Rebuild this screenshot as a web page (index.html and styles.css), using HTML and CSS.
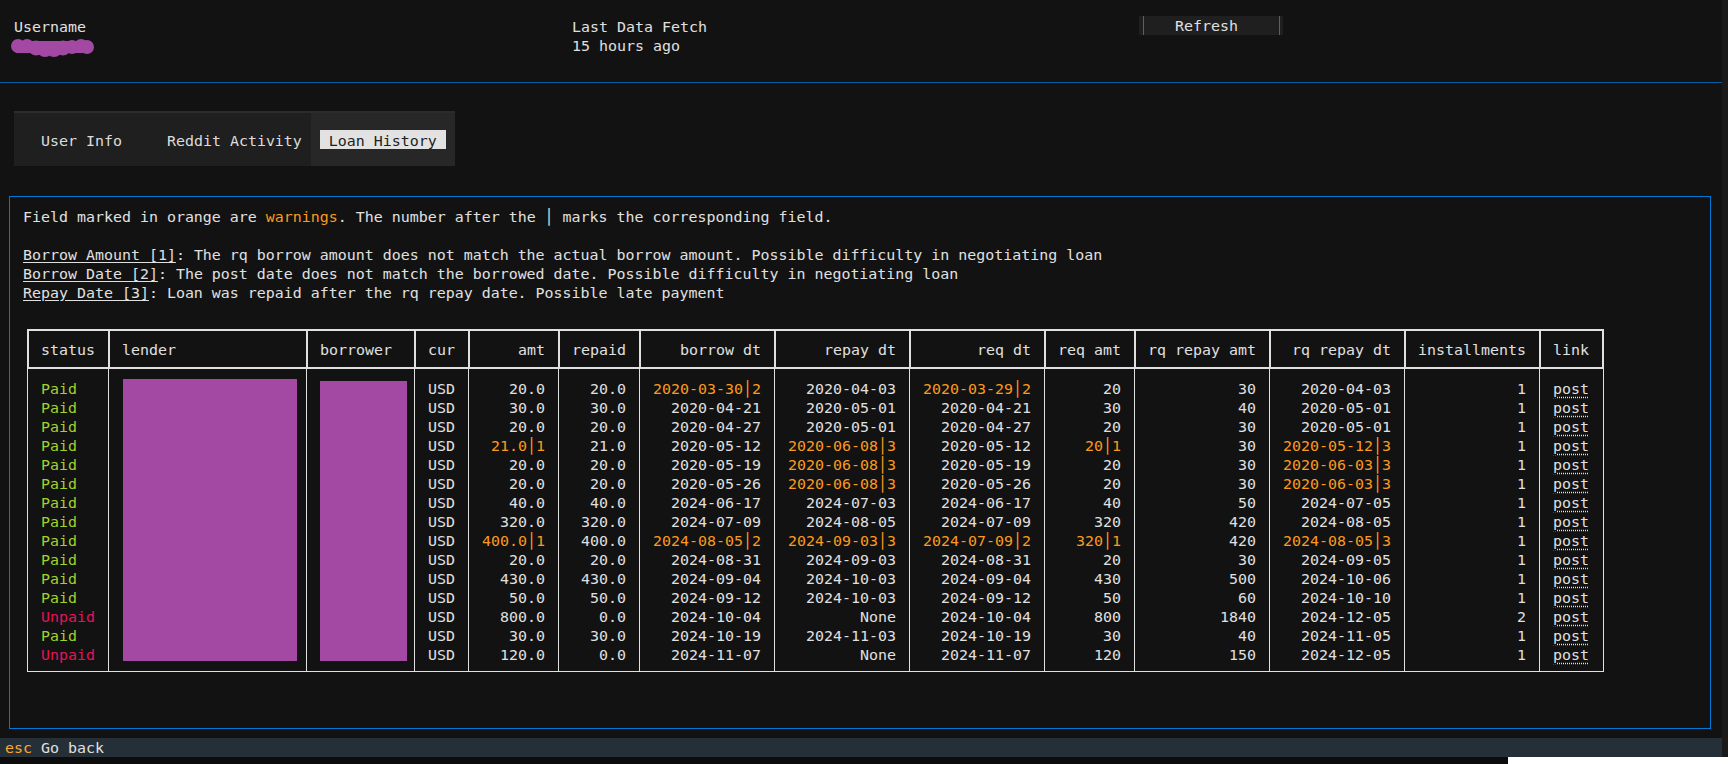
FILE: index.html
```html
<!DOCTYPE html>
<html lang="en">
<head>
<meta charset="utf-8">
<title>Loan History</title>
<link rel="stylesheet" href="styles.css">
</head>
<body>
<div class="screen">
  <div class="app">
    <header class="topbar">
      <div class="field">
        <div class="label">Username</div>
        <div class="value"><svg class="blob" width="84" height="19" viewBox="0 0 84 19" aria-label="redacted"><rect x="5" y="4" width="72" height="12" fill="#a349a4"/><circle cx="7" cy="9" r="7" fill="#a349a4"/><circle cx="16" cy="9" r="7" fill="#a349a4"/><circle cx="25" cy="11" r="7.5" fill="#a349a4"/><circle cx="34" cy="12" r="8" fill="#a349a4"/><circle cx="43" cy="12" r="8" fill="#a349a4"/><circle cx="52" cy="11" r="7.5" fill="#a349a4"/><circle cx="61" cy="10" r="7" fill="#a349a4"/><circle cx="70" cy="9" r="7" fill="#a349a4"/><circle cx="76" cy="10" r="7" fill="#a349a4"/></svg></div>
      </div>
      <div class="field">
        <div class="label">Last Data Fetch</div>
        <div class="value">15 hours ago</div>
      </div>
      <div class="actions">
        <button class="btn" type="button"><span class="btn-inner">Refresh</span></button>
      </div>
    </header>

    <div class="rule"></div>

    <nav class="tabs">
      <div class="tab tab-first">User Info</div>
      <div class="tab tab-second">Reddit Activity</div>
      <div class="tab tab-active"><span class="tab-label">Loan History</span></div>
    </nav>

    <section class="panel">
      <p class="intro">Field marked in orange are <span class="warn">warnings</span>. The number after the │ marks the corresponding field.</p>
      <ul class="legend">
        <li><span class="term">Borrow Amount [1]</span>: The rq borrow amount does not match the actual borrow amount. Possible difficulty in negotiating loan</li>
        <li><span class="term">Borrow Date [2]</span>: The post date does not match the borrowed date. Possible difficulty in negotiating loan</li>
        <li><span class="term">Repay Date [3]</span>: Loan was repaid after the rq repay date. Possible late payment</li>
      </ul>

      <div class="table-wrap">
        <table class="loans">
          <thead>
            <tr>
              <th class="c-status">status</th>
              <th class="c-lender">lender</th>
              <th class="c-borrower">borrower</th>
              <th class="c-cur">cur</th>
              <th class="c-amt">amt</th>
              <th class="c-repaid">repaid</th>
              <th class="c-date">borrow dt</th>
              <th class="c-date">repay dt</th>
              <th class="c-date">req dt</th>
              <th class="c-amt">req amt</th>
              <th class="c-date">rq repay amt</th>
              <th class="c-date">rq repay dt</th>
              <th class="c-date">installments</th>
              <th class="c-link">link</th>
            </tr>
          </thead>
          <tbody>
            <tr><td class="ok">Paid</td><td></td><td></td><td>USD</td><td>20.0</td><td>20.0</td><td class="warn">2020-03-30│2</td><td>2020-04-03</td><td class="warn">2020-03-29│2</td><td>20</td><td>30</td><td>2020-04-03</td><td>1</td><td><a class="post">post</a></td></tr>
            <tr><td class="ok">Paid</td><td></td><td></td><td>USD</td><td>30.0</td><td>30.0</td><td>2020-04-21</td><td>2020-05-01</td><td>2020-04-21</td><td>30</td><td>40</td><td>2020-05-01</td><td>1</td><td><a class="post">post</a></td></tr>
            <tr><td class="ok">Paid</td><td></td><td></td><td>USD</td><td>20.0</td><td>20.0</td><td>2020-04-27</td><td>2020-05-01</td><td>2020-04-27</td><td>20</td><td>30</td><td>2020-05-01</td><td>1</td><td><a class="post">post</a></td></tr>
            <tr><td class="ok">Paid</td><td></td><td></td><td>USD</td><td class="warn">21.0│1</td><td>21.0</td><td>2020-05-12</td><td class="warn">2020-06-08│3</td><td>2020-05-12</td><td class="warn">20│1</td><td>30</td><td class="warn">2020-05-12│3</td><td>1</td><td><a class="post">post</a></td></tr>
            <tr><td class="ok">Paid</td><td></td><td></td><td>USD</td><td>20.0</td><td>20.0</td><td>2020-05-19</td><td class="warn">2020-06-08│3</td><td>2020-05-19</td><td>20</td><td>30</td><td class="warn">2020-06-03│3</td><td>1</td><td><a class="post">post</a></td></tr>
            <tr><td class="ok">Paid</td><td></td><td></td><td>USD</td><td>20.0</td><td>20.0</td><td>2020-05-26</td><td class="warn">2020-06-08│3</td><td>2020-05-26</td><td>20</td><td>30</td><td class="warn">2020-06-03│3</td><td>1</td><td><a class="post">post</a></td></tr>
            <tr><td class="ok">Paid</td><td></td><td></td><td>USD</td><td>40.0</td><td>40.0</td><td>2024-06-17</td><td>2024-07-03</td><td>2024-06-17</td><td>40</td><td>50</td><td>2024-07-05</td><td>1</td><td><a class="post">post</a></td></tr>
            <tr><td class="ok">Paid</td><td></td><td></td><td>USD</td><td>320.0</td><td>320.0</td><td>2024-07-09</td><td>2024-08-05</td><td>2024-07-09</td><td>320</td><td>420</td><td>2024-08-05</td><td>1</td><td><a class="post">post</a></td></tr>
            <tr><td class="ok">Paid</td><td></td><td></td><td>USD</td><td class="warn">400.0│1</td><td>400.0</td><td class="warn">2024-08-05│2</td><td class="warn">2024-09-03│3</td><td class="warn">2024-07-09│2</td><td class="warn">320│1</td><td>420</td><td class="warn">2024-08-05│3</td><td>1</td><td><a class="post">post</a></td></tr>
            <tr><td class="ok">Paid</td><td></td><td></td><td>USD</td><td>20.0</td><td>20.0</td><td>2024-08-31</td><td>2024-09-03</td><td>2024-08-31</td><td>20</td><td>30</td><td>2024-09-05</td><td>1</td><td><a class="post">post</a></td></tr>
            <tr><td class="ok">Paid</td><td></td><td></td><td>USD</td><td>430.0</td><td>430.0</td><td>2024-09-04</td><td>2024-10-03</td><td>2024-09-04</td><td>430</td><td>500</td><td>2024-10-06</td><td>1</td><td><a class="post">post</a></td></tr>
            <tr><td class="ok">Paid</td><td></td><td></td><td>USD</td><td>50.0</td><td>50.0</td><td>2024-09-12</td><td>2024-10-03</td><td>2024-09-12</td><td>50</td><td>60</td><td>2024-10-10</td><td>1</td><td><a class="post">post</a></td></tr>
            <tr><td class="bad">Unpaid</td><td></td><td></td><td>USD</td><td>800.0</td><td>0.0</td><td>2024-10-04</td><td>None</td><td>2024-10-04</td><td>800</td><td>1840</td><td>2024-12-05</td><td>2</td><td><a class="post">post</a></td></tr>
            <tr><td class="ok">Paid</td><td></td><td></td><td>USD</td><td>30.0</td><td>30.0</td><td>2024-10-19</td><td>2024-11-03</td><td>2024-10-19</td><td>30</td><td>40</td><td>2024-11-05</td><td>1</td><td><a class="post">post</a></td></tr>
            <tr><td class="bad">Unpaid</td><td></td><td></td><td>USD</td><td>120.0</td><td>0.0</td><td>2024-11-07</td><td>None</td><td>2024-11-07</td><td>120</td><td>150</td><td>2024-12-05</td><td>1</td><td><a class="post">post</a></td></tr>
          </tbody>
        </table>
        <div class="redact redact-lender"></div>
        <div class="redact redact-borrower"></div>
      </div>
    </section>
  </div>

  <footer class="footer"><span class="key">esc</span> Go back</footer>
  <div class="bottom-strip"><div class="white-block"></div></div>
</div>
</body>
</html>
```

FILE: styles.css
```css
* {
  box-sizing: border-box;
}

html, body {
  margin: 0;
  padding: 0;
}

body {
  background: #1a1a1a;
  color: #e0e0e0;
  font-family: "DejaVu Sans Mono", "Liberation Mono", monospace;
  font-size: 14.95px;
  line-height: 19px;
  width: 1728px;
  height: 764px;
  overflow: hidden;
}

.screen {
  display: flex;
  flex-direction: column;
  width: 1728px;
}

.app {
  width: 1722px;
  height: 738px;
  background: #121212;
  display: flex;
  flex-direction: column;
}

/* ---------- header ---------- */
.topbar {
  display: grid;
  grid-template-columns: 558px 567px 144px;
  padding: 16px 0 0 14px;
}

.label {
  height: 21px;
  padding-top: 2px;
}

.value {
  height: 19px;
}

.blob {
  display: block;
  margin-left: -3px;
  overflow: visible;
}

.btn {
  display: block;
  width: 144px;
  height: 19px;
  padding: 0 3px 0 4px;
  margin: 0;
  border: 0;
  background: #1f1f1f;
  color: #e0e0e0;
  font: inherit;
  line-height: 19px;
  text-align: left;
}

.btn-inner {
  display: block;
  height: 19px;
  border-left: 1px solid #1b6fc2;
  border-right: 1px solid #1b6fc2;
  padding-left: 31px;
  padding-top: 1px;
}

.rule {
  height: 1px;
  background: #0b5c9c;
  margin: 26px 0 28px;
}

/* ---------- tabs ---------- */
.tabs {
  display: flex;
  width: 441px;
  height: 55px;
  margin-left: 14px;
  margin-bottom: 2px;
  background: #1f1f1f;
  border-top: 2px solid #2c2c2c;
}

.tab {
  white-space: pre;
  color: #dcdcdc;
}

.tab-first,
.tab-second {
  padding: 19px 0 15px;
}

.tab-first {
  margin-left: 27px;
}

.tab-second {
  margin-left: 45px;
}

.tab-active {
  display: flex;
  align-items: flex-start;
  flex: 1;
  margin-left: 9px;
  padding: 17px 0;
  background: #272727;
}

.tab-label {
  display: block;
  height: 19px;
  margin-left: 9px;
  padding: 2px 9px 0;
  background: #e2e2e2;
  color: #1e1e1e;
}

/* ---------- panel ---------- */
.panel {
  margin: 28px 11px 9px 9px;
  border: 1px solid #0178d4;
  padding: 11px 13px 7px;
}

.intro {
  margin: 0 0 19px;
  white-space: pre;
}

.legend {
  list-style: none;
  margin: 0 0 26px;
  padding: 0;
}

.legend li {
  white-space: pre;
}

.term {
  text-decoration: underline;
  text-underline-offset: 2px;
}

.warn {
  color: #fb9a1e;
}

.ok {
  color: #a0d22a;
}

.bad {
  color: #e3125c;
}

/* ---------- table ---------- */
.table-wrap {
  position: relative;
  margin: 0 0 49px 4px;
  width: 1577px;
}

.loans {
  table-layout: fixed;
  width: 1577px;
  border-collapse: separate;
  border-spacing: 0;
}

.loans th,
.loans td {
  white-space: pre;
  overflow: hidden;
  text-align: left;
  font-weight: normal;
  line-height: 19px;
}

.loans th {
  border-top: 2px solid #e0e0e0;
  border-bottom: 2px solid #e0e0e0;
  border-left: 2px solid #e0e0e0;
  padding: 10px 13px 7px 12px;
}

.loans th:last-child {
  border-right: 2px solid #e0e0e0;
}

.loans td {
  height: 19px;
  border-left: 1px solid #e0e0e0;
  padding: 0 13px;
}

.loans td:last-child {
  border-right: 1px solid #e0e0e0;
}

.loans tbody tr:first-child td {
  padding-top: 11px;
  height: 30px;
}

.loans tbody tr:last-child td {
  padding-bottom: 6px;
  height: 26px;
  border-bottom: 1px solid #e0e0e0;
}

.loans th:nth-child(n+5):nth-child(-n+13),
.loans td:nth-child(n+5):nth-child(-n+13) {
  text-align: right;
}

.c-status { width: 81px; }
.c-lender { width: 198px; }
.c-borrower { width: 108px; }
.c-cur { width: 54px; }
.c-amt { width: 90px; }
.c-repaid { width: 81px; }
.c-date { width: 135px; }
.c-link { width: 65px; }

.post {
  color: #e0e0e0;
  text-decoration: underline dotted;
  text-underline-offset: 3px;
}

.redact {
  position: absolute;
  background: #a349a4;
}

.redact-lender {
  left: 96px;
  top: 50px;
  width: 174px;
  height: 282px;
}

.redact-borrower {
  left: 293px;
  top: 52px;
  width: 87px;
  height: 280px;
}

/* ---------- footer ---------- */
.footer {
  width: 1722px;
  height: 19px;
  background: #242f38;
  padding: 1px 0 0 5px;
  white-space: pre;
}

.key {
  color: #ffa62b;
}

.bottom-strip {
  height: 7px;
  background: #0c0c0c;
  display: flex;
  justify-content: flex-end;
}

.white-block {
  width: 220px;
  background: #ffffff;
}
```
